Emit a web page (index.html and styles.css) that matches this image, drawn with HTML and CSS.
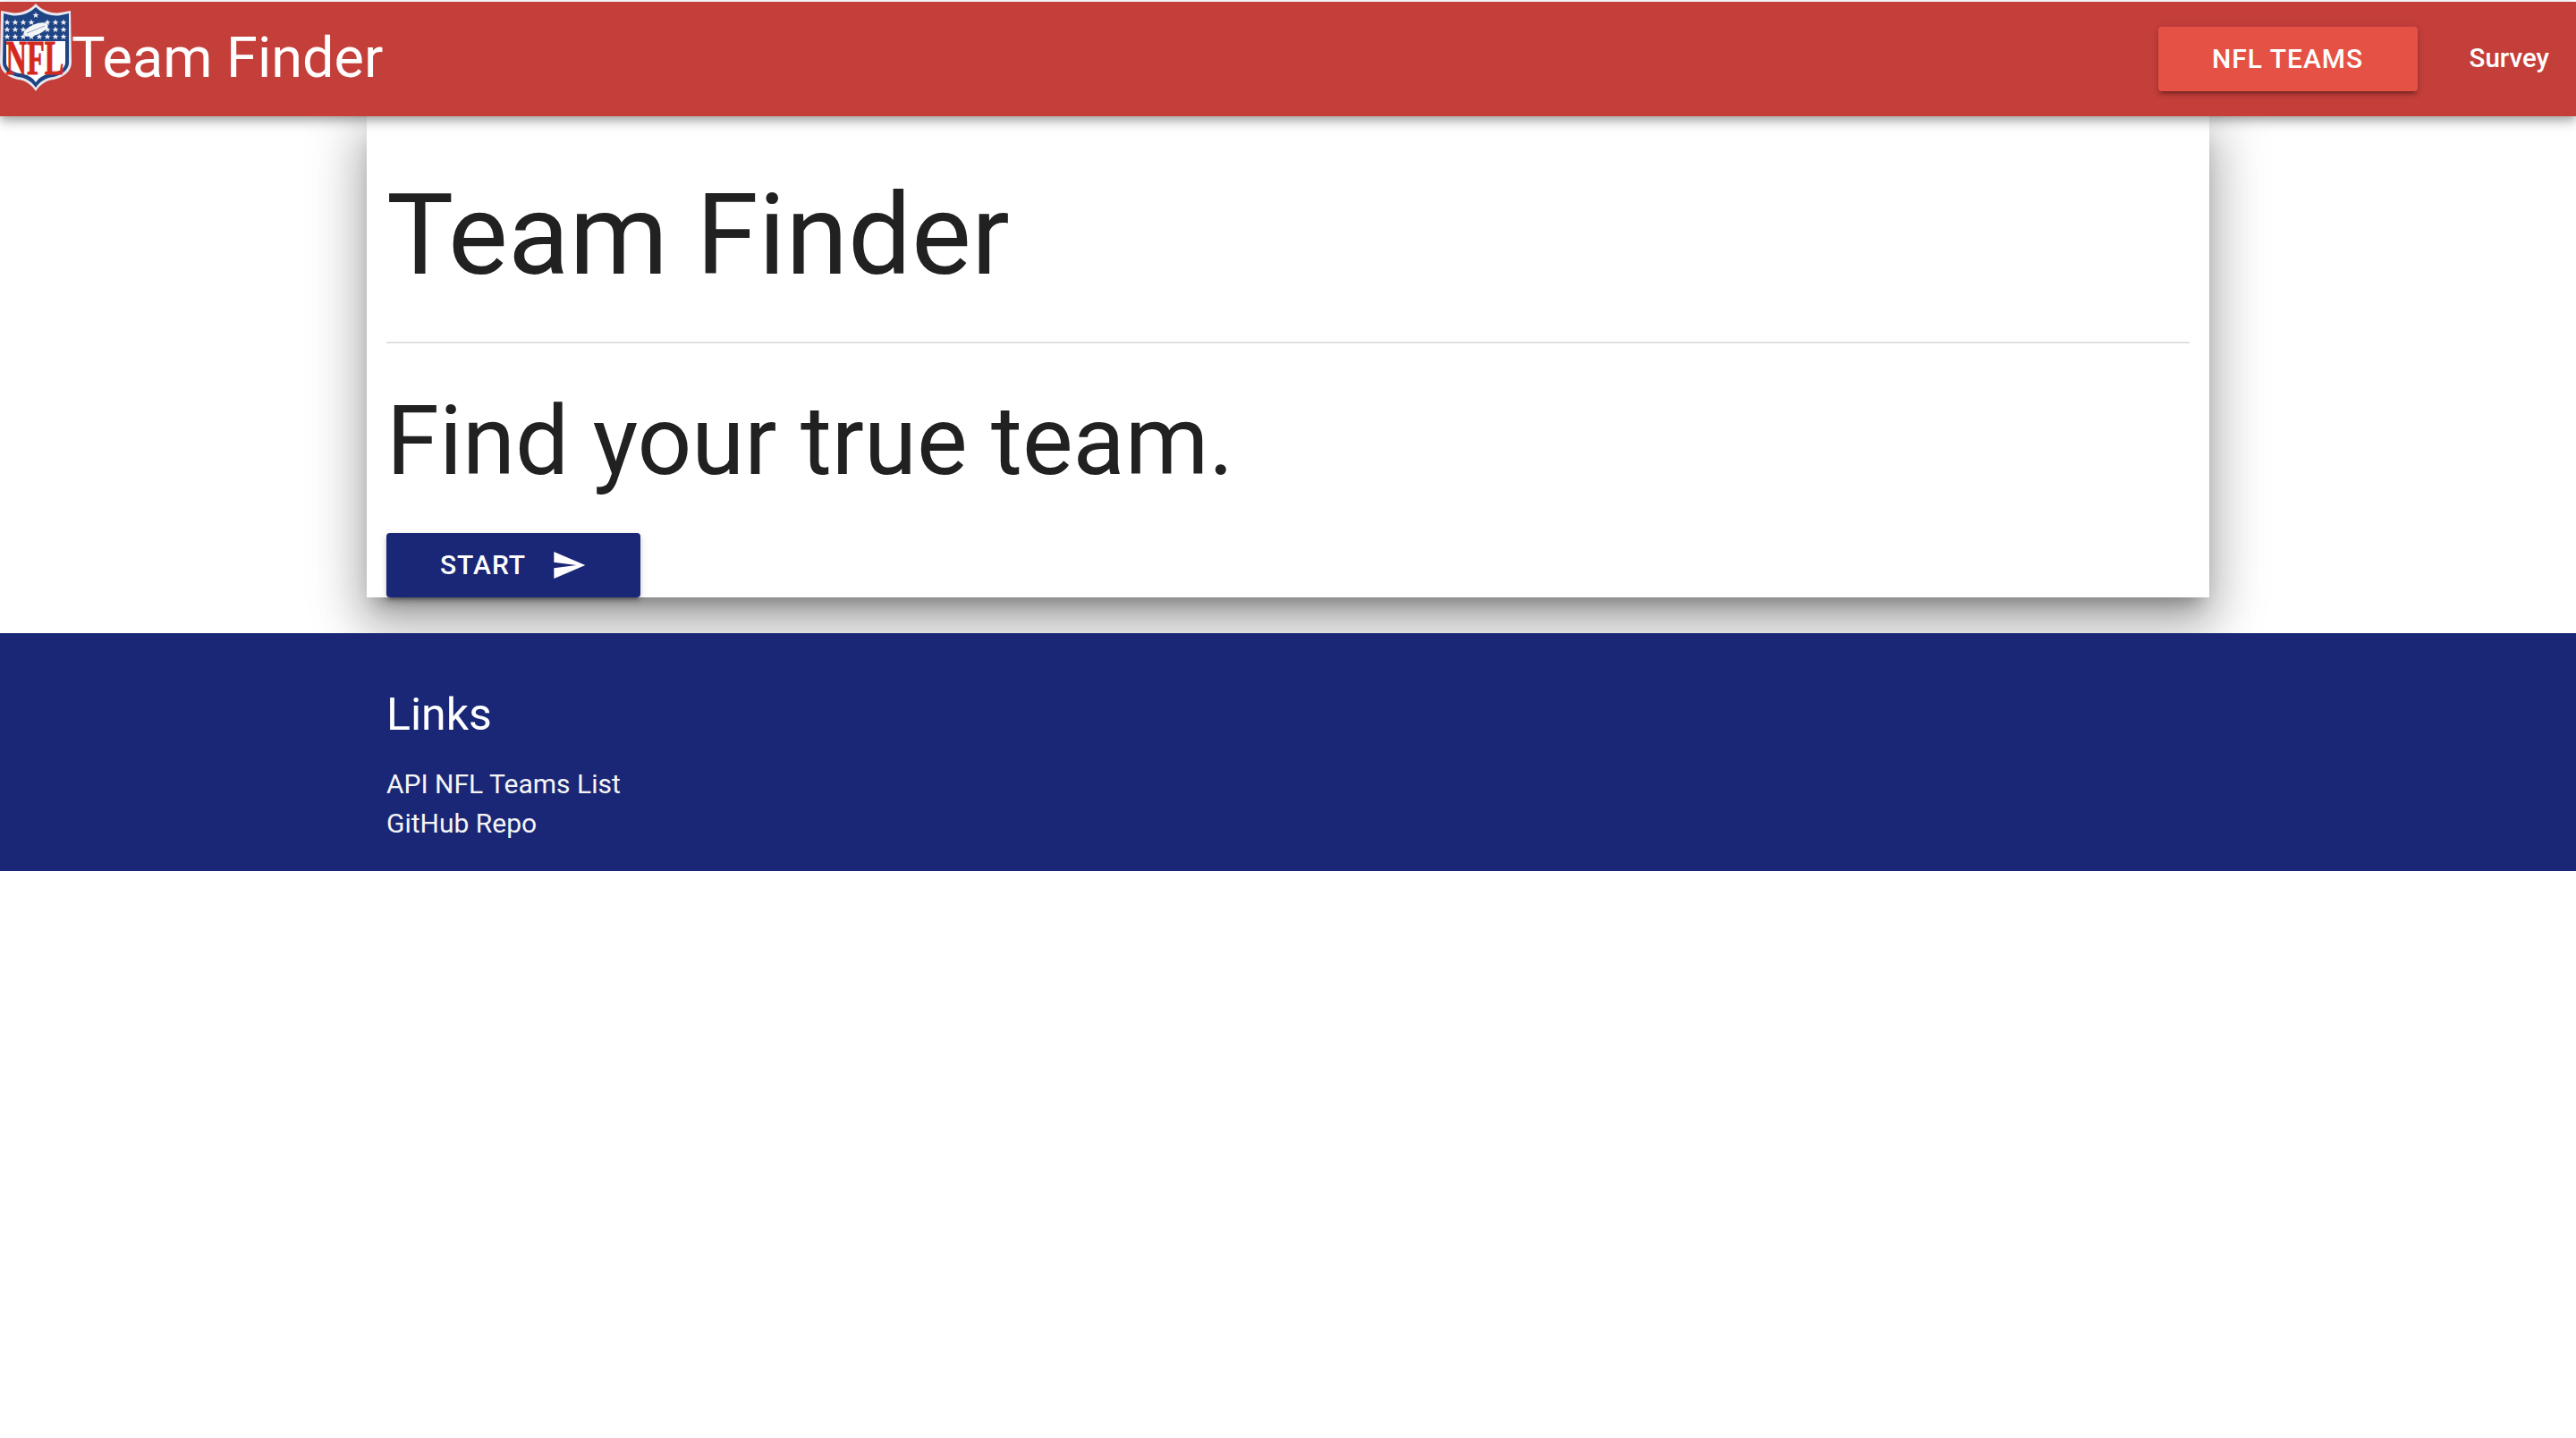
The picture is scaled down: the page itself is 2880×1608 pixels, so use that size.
FILE: index.html
```html
<!DOCTYPE html>
<html lang="en">
<head>
    <meta charset="UTF-8">
    <meta name="viewport" content="width=device-width, initial-scale=1.0">
    <title>Team Finder</title>
    <link rel="stylesheet" href="styles.css">
</head>
<body>
    <header class="toolbar">
        <svg class="logo" viewBox="0 0 80 100">
            <defs>
                <polygon id="star" points="0,-3.6 1,-1.1 3.5,-1.1 1.5,0.5 2.2,3 0,1.5 -2.2,3 -1.5,0.5 -3.5,-1.1 -1,-1.1"/>
            </defs>
            <!-- shield -->
            <path d="M40 2 C46 9 58 14 68 12 L79 10 L80 68 C80 78 70 85 60 87 C50 88 44 94 40 100 C36 94 30 88 20 87 C10 85 0 78 0 68 L1 10 L12 12 C22 14 34 9 40 2 Z" fill="#e6e9f0"/>
            <path d="M40 6 C47 13 58 17 68 15 L77 13 L77 68 C77 76 69 82 60 84 C50 85 44 90 40 96 C36 90 30 85 20 84 C11 82 3 76 3 68 L4 13 L12 15 C22 17 33 13 40 6 Z" fill="#1f4486"/>
            <path d="M7 44 H73 V68 C73 74 66 79 58 80 C50 81 44 84 40 90 C36 84 30 81 22 80 C14 79 7 74 7 68 Z" fill="#fff"/>
            <g class="logo-stars">
                <use href="#star" x="40" y="15"/>
                <use href="#star" x="8" y="23"/><use href="#star" x="17" y="23"/><use href="#star" x="26" y="23"/><use href="#star" x="35" y="23"/><use href="#star" x="53" y="23"/><use href="#star" x="62" y="23"/><use href="#star" x="71" y="23"/>
                <use href="#star" x="8" y="31"/><use href="#star" x="17" y="31"/><use href="#star" x="26" y="31"/><use href="#star" x="53" y="31"/><use href="#star" x="62" y="31"/><use href="#star" x="71" y="31"/>
                <use href="#star" x="8" y="39"/><use href="#star" x="17" y="39"/><use href="#star" x="26" y="39"/><use href="#star" x="35" y="39"/><use href="#star" x="44" y="39"/><use href="#star" x="53" y="39"/><use href="#star" x="62" y="39"/><use href="#star" x="71" y="39"/>
            </g>
            <ellipse cx="40" cy="31" rx="14.5" ry="6" transform="rotate(-22 40 31)" fill="#f4f5f7"/>
            <path d="M30 35 L50 27" stroke="#8fa0bf" stroke-width="1" fill="none"/>
            <text class="logo-nfl" transform="translate(39 81) scale(0.6 1)">NFL</text>
        </svg>
        <div class="toolbar-title">Team Finder</div>
        <div class="spacer"></div>
        <a class="btn btn-red">NFL TEAMS</a>
        <a class="nav-link">Survey</a>
    </header>

    <main class="card">
        <h1>Team Finder</h1>
        <hr>
        <h2>Find your true team.</h2>
        <a class="btn btn-navy">START
            <svg class="send-icon" viewBox="0 0 24 24"><path d="M2.01 21L23 12 2.01 3 2 10l15 2-15 2z"/></svg>
        </a>
    </main>

    <footer class="footer">
        <h3>Links</h3>
        <a>API NFL Teams List</a>
        <a>GitHub Repo</a>
    </footer>
</body>
</html>
```

FILE: styles.css
```css
body {
    margin: 0;
    padding-top: 2px;
    background: white;
    font-family: Roboto, sans-serif;
    color: #212121;
}
.toolbar {
    position: relative;
    z-index: 2;
    display: flex;
    align-items: center;
    height: 128px;
    background-color: #c43e3a;
    box-shadow: 0 4px 8px -2px rgba(0,0,0,0.2), 0 8px 10px 0 rgba(0,0,0,0.14), 0 2px 20px 0 rgba(0,0,0,0.12);
    color: white;
}
.logo {
    align-self: flex-start;
    width: 80px;
    height: 100px;
}
.logo-stars {
    fill: #eef0f4;
}
.logo-nfl {
    font-family: "Liberation Serif", serif;
    font-size: 54px;
    font-weight: bold;
    fill: #d42a1e;
    stroke: #d42a1e;
    stroke-width: 1px;
    text-anchor: middle;
}
.toolbar-title {
    margin-top: -3px;
    font-size: 63px;
    font-weight: 400;
}
.spacer {
    flex: 1;
}
.btn {
    display: flex;
    align-items: center;
    justify-content: center;
    box-sizing: border-box;
    height: 72px;
    padding-bottom: 2px;
    border-radius: 4px;
    font-size: 30px;
    font-weight: 500;
    letter-spacing: 1px;
    color: white;
    box-shadow: 0 6px 2px -4px rgba(0,0,0,0.2), 0 4px 4px 0 rgba(0,0,0,0.14), 0 2px 10px 0 rgba(0,0,0,0.12);
}
.btn-red {
    width: 290px;
    background-color: #e55245;
}
.nav-link {
    margin-left: 58px;
    margin-right: 30px;
    margin-bottom: 2px;
    font-size: 29.5px;
    font-weight: 500;
}
.card {
    width: 2016px;
    margin: 0 auto;
    padding: 0 22px;
    background: white;
    box-shadow: 0 16px 20px -10px rgba(0,0,0,0.3), 0 32px 48px 4px rgba(0,0,0,0.2), 0 12px 60px 10px rgba(0,0,0,0.16);
}
h1 {
    margin: 0;
    padding-top: 56px;
    font-size: 126px;
    font-weight: 400;
    line-height: 155px;
}
hr {
    margin: 41px 0 0;
    border: none;
    border-top: 2px solid #e0e0e0;
}
h2 {
    margin: 0;
    padding-top: 45px;
    font-size: 106.8px;
    font-weight: 400;
    line-height: 130px;
}
.btn-navy {
    width: 284px;
    margin-top: 37px;
    background-color: #1a2777;
}
.send-icon {
    width: 40px;
    height: 40px;
    margin-left: 28px;
    margin-top: 2px;
    fill: white;
}
.footer {
    position: relative;
    z-index: 1;
    margin-top: 40px;
    height: 266px;
    box-sizing: border-box;
    padding: 61px 432px 0;
    background-color: #1a2777;
    color: white;
}
.footer h3 {
    margin: 0 0 26px;
    font-size: 50px;
    font-weight: 400;
    line-height: 60px;
}
.footer a {
    display: block;
    font-size: 30px;
    font-weight: 400;
    line-height: 44px;
    color: #f5f5f5;
}
```
